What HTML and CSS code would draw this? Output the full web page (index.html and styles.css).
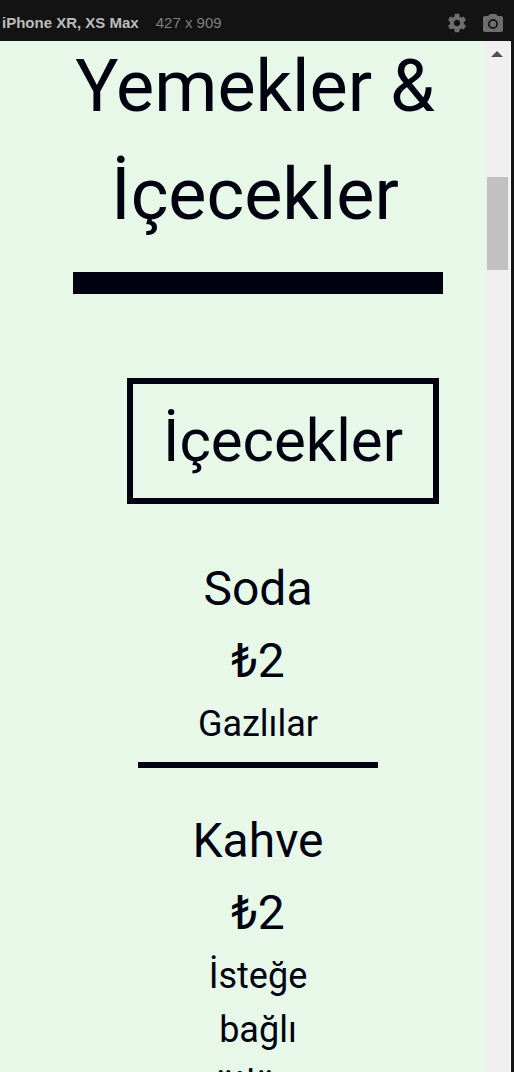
FILE: index.html
```html
<!DOCTYPE html>
<html lang="tr">
<head>
<meta charset="utf-8">
<title>Yemekler &amp; İçecekler</title>
<link rel="stylesheet" href="styles.css">
</head>
<body>
<header class="toolbar">
  <strong class="device">iPhone XR, XS Max</strong>
  <span class="size">427 x 909</span>
  <button class="tool" aria-label="Settings">
    <svg viewBox="0 0 24 24" width="22" height="22"><path fill="currentColor" d="M19.43 12.98c.04-.32.07-.64.07-.98s-.03-.66-.07-.98l2.11-1.65c.19-.15.24-.42.12-.64l-2-3.46c-.12-.22-.39-.3-.61-.22l-2.49 1c-.52-.4-1.08-.73-1.69-.98l-.38-2.65C14.46 2.18 14.25 2 14 2h-4c-.25 0-.46.18-.49.42l-.38 2.65c-.61.25-1.17.59-1.69.98l-2.49-1c-.23-.09-.49 0-.61.22l-2 3.46c-.13.22-.07.49.12.64l2.11 1.65c-.04.32-.07.65-.07.98s.03.66.07.98l-2.11 1.65c-.19.15-.24.42-.12.64l2 3.46c.12.22.39.3.61.22l2.49-1c.52.4 1.08.73 1.69.98l.38 2.65c.03.24.24.42.49.42h4c.25 0 .46-.18.49-.42l.38-2.65c.61-.25 1.17-.59 1.69-.98l2.49 1c.23.09.49 0 .61-.22l2-3.46c.12-.22.07-.49-.12-.64l-2.11-1.65zM12 15.5c-1.93 0-3.5-1.57-3.5-3.5s1.57-3.5 3.5-3.5 3.5 1.57 3.5 3.5-1.57 3.5-3.5 3.5z"/></svg>
  </button>
  <button class="tool" aria-label="Screenshot">
    <svg viewBox="0 0 24 24" width="24" height="24"><path fill="currentColor" fill-rule="evenodd" d="M9 3 7.200 5H4c-1.100 0-2 .9-2 2v12c0 1.100.9 2 2 2h16c1.100 0 2-.9 2-2V7c0-1.100-.9-2-2-2h-3.200L15 3zM12 8a5 5 0 1 1 0 10a5 5 0 0 1 0-10z"/><circle cx="12" cy="13" r="3.200" fill="currentColor"/></svg>
  </button>
</header>
<div class="viewport">
  <main class="page">
    <h1 class="title">Yemekler &amp; İçecekler</h1>
    <hr class="rule">
    <h2 class="category">İçecekler</h2>
    <ul class="menu">
      <li class="item">
        <h3 class="name">Soda</h3>
        <p class="price">₺2</p>
        <p class="note">Gazlılar</p>
      </li>
      <li class="item">
        <h3 class="name">Kahve</h3>
        <p class="price">₺2</p>
        <p class="note">İsteğe bağlı sütlü ve</p>
      </li>
    </ul>
  </main>
  <div class="scrollbar">
    <svg class="arrow" viewBox="0 0 12 6" width="12" height="6"><path fill="#505050" d="M6 0 12 6H0z"/></svg>
    <div class="thumb"></div>
  </div>
</div>
</body>
</html>
```
FILE: styles.css
```css
* { box-sizing: border-box; }

body {
  margin: 0;
  height: 100vh;
  display: flex;
  flex-direction: column;
  overflow: hidden;
  background: #131313;
  color: #00030f;
  font-family: Roboto, "Noto Sans", sans-serif;
}

.toolbar {
  flex: none;
  display: flex;
  align-items: center;
  height: 41px;
  padding: 4px 9px 0 2px;
  font: 15px/20px "Liberation Sans", Arial, sans-serif;
  color: #7f7f7f;
}

.device { color: #bdbdbd; }
.size { margin: 0 auto 0 17px; }

.tool {
  display: flex;
  margin-left: 13px;
  padding: 0;
  border: 0;
  background: none;
  color: #6e6e6e;
}

.viewport {
  flex: 1;
  min-height: 0;
  display: flex;
  margin-right: 3px;
  overflow: hidden;
  background: #e7f8e9;
  border-top-right-radius: 2px;
}

.page {
  flex: 1;
  padding-left: 31px;
  text-align: center;
}

.title {
  margin: -8px 48px 23px 42px;
  font-size: 72px;
  line-height: 108px;
  font-weight: 400;
}

.rule {
  width: 370px;
  height: 22px;
  margin: 0 auto 84px;
  border: 0;
  background: #00030f;
}

.category {
  width: fit-content;
  margin: 0 46px 49px auto;
  padding: 12px 30px;
  border: 6px solid #00030f;
  font-size: 60px;
  line-height: 90px;
  font-weight: 400;
}

.menu {
  margin: 0;
  padding: 0;
  list-style: none;
}

.item {
  width: 240px;
  margin: 0 auto 37px;
  padding-bottom: 11px;
  border-bottom: 6px solid #00030f;
}

.name, .price, .note {
  margin: 0;
  font-size: 48px;
  line-height: 72px;
  font-weight: 400;
}

.note {
  padding: 0 48px;
  font-size: 36px;
  line-height: 54px;
}

.scrollbar {
  flex: none;
  width: 26px;
  display: flex;
  flex-direction: column;
  align-items: center;
  padding: 10px 1px 0 0;
  background: #f0f0f0;
  border-right: 1px solid #fff;
}

.thumb {
  width: 21px;
  height: 93px;
  margin-top: 120px;
  background: #c1c1c1;
}
```
